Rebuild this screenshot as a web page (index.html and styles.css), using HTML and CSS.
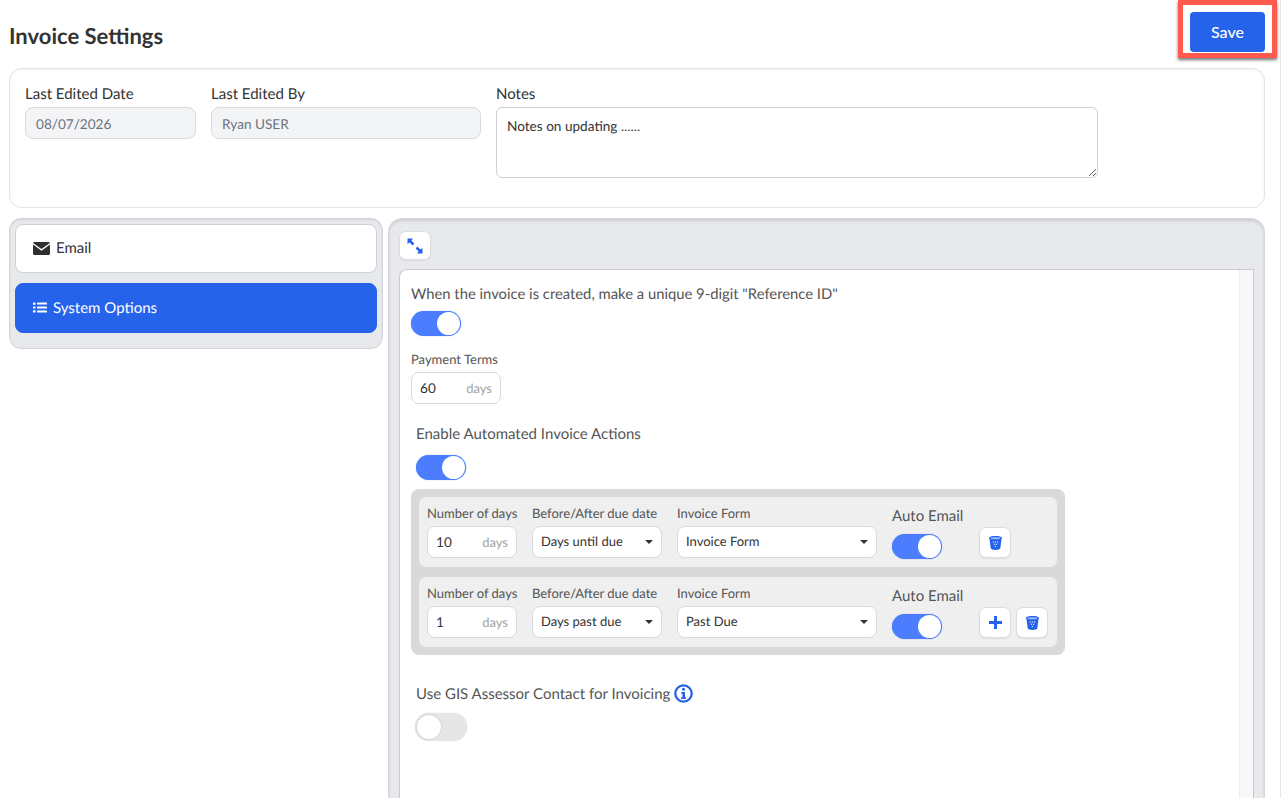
FILE: index.html
```html
<!DOCTYPE html>
<html lang="en">
<head>
    <meta charset="UTF-8">
    <title>Invoice Settings</title>
    <link rel="stylesheet" href="styles.css">
</head>
<body>
    <div class="page">
        <!-- Header -->
        <div class="header">
            <h1>Invoice Settings</h1>
            <div class="save-wrap">
                <button class="save-button">Save</button>
                <div class="save-highlight"></div>
            </div>
        </div>

        <!-- Summary card -->
        <div class="summary-card">
            <div class="field field-date">
                <label>Last Edited Date</label>
                <div class="readonly-input">08/07/2026</div>
            </div>
            <div class="field field-by">
                <label>Last Edited By</label>
                <div class="readonly-input">Ryan USER</div>
            </div>
            <div class="field field-notes">
                <label>Notes</label>
                <div class="notes-box">
                    Notes on updating ......
                    <svg class="resize-grip" width="8" height="8" viewBox="0 0 8 8"><path d="M1 8L8 1M5 8L8 5" stroke="#666" stroke-width="1"/></svg>
                </div>
            </div>
        </div>

        <div class="columns">
            <!-- Side tabs -->
            <div class="side-panel">
                <div class="tab">
                    <svg width="17" height="13" viewBox="0 0 17 13"><path d="M1.500 0h14c.6 0 1.200.4 1.400 1L8.500 7 .1 1C.3.4.9 0 1.500 0z" fill="#2f2f2f"/><path d="M0 2.600V11.500C0 12.300.7 13 1.500 13h14c.8 0 1.500-.7 1.500-1.500V2.600L8.500 8.700z" fill="#2f2f2f"/></svg>
                    Email
                </div>
                <div class="tab tab-active">
                    <svg width="14" height="11" viewBox="0 0 14 11"><g fill="#fff"><rect x="0" y="0.500" width="2.500" height="2.200" rx=".5"/><rect x="0" y="4.400" width="2.500" height="2.200" rx=".5"/><rect x="0" y="8.300" width="2.500" height="2.200" rx=".5"/><rect x="4" y="0.600" width="10" height="2" rx=".5"/><rect x="4" y="4.500" width="10" height="2" rx=".5"/><rect x="4" y="8.400" width="10" height="2" rx=".5"/></g></svg>
                    System Options
                </div>
            </div>

            <!-- Main panel -->
            <div class="main-panel">
                <button class="icon-button expand-button">
                    <svg width="16" height="16" viewBox="0 0 16 16"><path d="M0.500 0.500H6L4.400 2.600L7.400 5.600L5.600 7.400L2.600 4.400L0.500 6zM15.500 15.500H10L11.600 13.400L8.600 10.400L10.400 8.600L13.400 11.600L15.500 10z" fill="#2563eb"/></svg>
                </button>
                <div class="content-box">
                    <div class="content">
                        <div class="option-title first-title">When the invoice is created, make a unique 9-digit "Reference ID"</div>
                        <div class="toggle on"><span></span></div>

                        <div class="small-label terms-label">Payment Terms</div>
                        <div class="days-input terms-input"><span>60</span><em>days</em></div>

                        <div class="indented auto-option">
                            <div class="option-title">Enable Automated Invoice Actions</div>
                            <div class="toggle on toggle-auto"><span></span></div>
                        </div>

                        <div class="actions-group">
                            <div class="action-row">
                                <div class="col-days">
                                    <div class="small-label">Number of days</div>
                                    <div class="days-input"><span>10</span><em>days</em></div>
                                </div>
                                <div class="col-when">
                                    <div class="small-label">Before/After due date</div>
                                    <div class="select-box">Days until due<i></i></div>
                                </div>
                                <div class="col-form">
                                    <div class="small-label">Invoice Form</div>
                                    <div class="select-box">Invoice Form<i></i></div>
                                </div>
                                <div class="col-auto">
                                    <div class="auto-label">Auto Email</div>
                                    <div class="toggle on"><span></span></div>
                                </div>
                                <div class="col-buttons">
                                    <button class="icon-button">
                                        <svg width="13" height="14" viewBox="0 0 13 14"><path d="M6.500 0C9.800 0 13 .6 13 2.200c0 .4-.2.7-.5 1L11.300 12.300C10.800 14.500 2.200 14.500 1.700 12.300L.5 3.200C.2 2.900 0 2.600 0 2.200 0 .6 3.200 0 6.500 0z" fill="#2563eb"/><ellipse cx="6.500" cy="2.200" rx="5" ry="1" fill="#9db9f5"/><g fill="#cfdcfa"><circle cx="4.300" cy="6" r=".7"/><circle cx="6.500" cy="6" r=".7"/><circle cx="8.700" cy="6" r=".7"/><circle cx="5.400" cy="8.200" r=".7"/><circle cx="7.600" cy="8.200" r=".7"/><circle cx="6.500" cy="10.400" r=".7"/></g></svg>
                                    </button>
                                </div>
                            </div>
                            <div class="action-row">
                                <div class="col-days">
                                    <div class="small-label">Number of days</div>
                                    <div class="days-input"><span>1</span><em>days</em></div>
                                </div>
                                <div class="col-when">
                                    <div class="small-label">Before/After due date</div>
                                    <div class="select-box">Days past due<i></i></div>
                                </div>
                                <div class="col-form">
                                    <div class="small-label">Invoice Form</div>
                                    <div class="select-box">Past Due<i></i></div>
                                </div>
                                <div class="col-auto">
                                    <div class="auto-label">Auto Email</div>
                                    <div class="toggle on"><span></span></div>
                                </div>
                                <div class="col-buttons">
                                    <button class="icon-button">
                                        <svg width="13" height="13" viewBox="0 0 13 13"><path d="M5 0h3v5h5v3H8v5H5V8H0V5h5z" fill="#2563eb"/></svg>
                                    </button>
                                    <button class="icon-button">
                                        <svg width="13" height="14" viewBox="0 0 13 14"><path d="M6.500 0C9.800 0 13 .6 13 2.200c0 .4-.2.7-.5 1L11.300 12.300C10.800 14.500 2.200 14.500 1.700 12.300L.5 3.200C.2 2.900 0 2.600 0 2.200 0 .6 3.200 0 6.500 0z" fill="#2563eb"/><ellipse cx="6.500" cy="2.200" rx="5" ry="1" fill="#9db9f5"/><g fill="#cfdcfa"><circle cx="4.300" cy="6" r=".7"/><circle cx="6.500" cy="6" r=".7"/><circle cx="8.700" cy="6" r=".7"/><circle cx="5.400" cy="8.200" r=".7"/><circle cx="7.600" cy="8.200" r=".7"/><circle cx="6.500" cy="10.400" r=".7"/></g></svg>
                                    </button>
                                </div>
                            </div>
                        </div>

                        <div class="indented gis-option">
                            <div class="option-title">Use GIS Assessor Contact for Invoicing
                                <svg class="info-icon" width="19" height="19" viewBox="0 0 19 19"><circle cx="9.500" cy="9.500" r="8.200" fill="#fff" stroke="#2563eb" stroke-width="2.300"/><circle cx="9.500" cy="5.300" r="1.500" fill="#2563eb"/><path d="M7.300 8h3.700v5.200h1v1.800H7.200v-1.800h1.200V9.700H7.300z" fill="#2563eb"/></svg>
                            </div>
                            <div class="toggle off"><span></span></div>
                        </div>
                    </div>
                    <div class="scroll-track"></div>
                </div>
            </div>
        </div>
    </div>
</body>
</html>
```

FILE: styles.css
```css
/* Global Styles */
* {
    margin: 0;
    padding: 0;
    box-sizing: border-box;
}

html, body {
    height: 798px;
    overflow: hidden;
}

body {
    font-family: 'Lato', 'Liberation Sans', sans-serif;
    text-rendering: geometricPrecision;
    background: #fff;
    color: #333;
}

.page {
    width: 1281px;
    height: 798px;
    padding: 0 15px 0 9px;
    border-right: 1px solid #e6e6e6;
    overflow: hidden;
}

/* Header */
.header {
    display: flex;
    justify-content: space-between;
    height: 68px;
    padding-top: 12px;
}

.header h1 {
    font-size: 22px;
    font-weight: 700;
    color: #333;
    line-height: 47px;
}

.save-wrap {
    position: relative;
    width: 75px;
    height: 40px;
}

.save-button {
    width: 75px;
    height: 40px;
    padding-bottom: 2px;
    background: #2563eb;
    color: #fff;
    border: none;
    border-radius: 4px;
    font-family: inherit;
    font-size: 16px;
    font-weight: 500;
}

.save-highlight {
    position: absolute;
    top: -12px;
    left: -12px;
    width: 99px;
    height: 58px;
    border: 5px solid #ff5a4d;
    box-shadow: 0 2px 3px rgba(0, 0, 0, 0.55);
}

/* Summary card */
.summary-card {
    display: flex;
    height: 140px;
    padding: 16px 15px;
    border: 1px solid #e3e4e7;
    border-radius: 12px;
    box-shadow: inset 0 1px 3px rgba(0, 0, 0, 0.06);
}

.field label {
    display: block;
    font-size: 15px;
    line-height: 18px;
    color: #333;
    margin-bottom: 4px;
}

.field-date {
    width: 171px;
    margin-right: 15px;
}

.field-by {
    width: 270px;
    margin-right: 15px;
}

.field-notes {
    width: 602px;
}

.readonly-input {
    height: 32px;
    line-height: 33px;
    padding: 0 10px;
    background: #f3f4f6;
    border: 1px solid #d8dade;
    border-radius: 8px;
    font-size: 13.6px;
    color: #6b7280;
}

.notes-box {
    position: relative;
    height: 71px;
    padding: 10px;
    border: 1px solid #cfd1d5;
    border-radius: 6px;
    font-size: 13.6px;
    line-height: 17px;
    color: #333;
}

.resize-grip {
    position: absolute;
    right: 1px;
    bottom: 1px;
}

/* Columns */
.columns {
    display: flex;
    gap: 5px;
    margin-top: 10px;
    align-items: flex-start;
}

.side-panel {
    width: 374px;
    height: 131px;
    padding: 5px;
    background: #e8e9ed;
    border: 1px solid #d4d5d9;
    border-radius: 12px;
    box-shadow: inset 0 1px 2px rgba(0, 0, 0, 0.1);
}

.tab {
    display: flex;
    align-items: center;
    height: 49px;
    margin-bottom: 10px;
    padding: 0 0 1px 17px;
    gap: 6px;
    background: #fff;
    border: 1px solid #d0d1d5;
    border-radius: 8px;
    font-size: 15px;
    color: #333;
}

.tab-active {
    height: 50px;
    background: #2563eb;
    border-color: #2563eb;
    color: #fff;
}

.main-panel {
    width: 877px;
    height: 640px;
    padding: 12px 10px 0;
    background: #e8e9ed;
    border: 1px solid #d4d5d9;
    border-radius: 14px 14px 0 0;
    box-shadow: inset 0 2px 3px rgba(0, 0, 0, 0.12);
}

.icon-button {
    display: inline-flex;
    align-items: center;
    justify-content: center;
    width: 32px;
    height: 31px;
    background: #fff;
    border: 1px solid #dcdde0;
    border-radius: 7px;
    box-shadow: 0 1px 2px rgba(0, 0, 0, 0.06);
}

.expand-button {
    display: flex;
    height: 29px;
    margin-bottom: 9px;
}

.content-box {
    display: flex;
    height: 600px;
    background: #fff;
    border: 1px solid #c9cacd;
    border-bottom: none;
    border-radius: 8px 0 0 0;
}

.content {
    flex: 1;
    min-width: 0;
    padding: 14px 11px 0;
}

.scroll-track {
    width: 14px;
    background: #f8f8f8;
    border-left: 1px solid #efefef;
}

.option-title {
    font-size: 15px;
    line-height: 20px;
    color: #555;
}

.first-title {
    font-size: 14.8px;
}

.small-label {
    font-size: 13px;
    line-height: 16px;
    color: #555;
    white-space: nowrap;
}

.terms-label {
    margin-top: 15px;
}

.terms-input {
    margin-top: 5px;
}

/* Toggle */
.toggle {
    position: relative;
    width: 50px;
    height: 25px;
    margin-top: 7px;
    border-radius: 13px;
}

.toggle span {
    position: absolute;
    top: 1px;
    width: 23px;
    height: 23px;
    background: #fff;
    border-radius: 50%;
}

.toggle.on {
    background: #4c7dff;
    box-shadow: 0 0 1px rgba(37, 99, 235, 0.6);
}

.toggle.on span {
    right: 1px;
}

.toggle.off {
    width: 52px;
    height: 28px;
    margin-top: 9px;
    margin-left: -1px;
    border-radius: 14px;
    background: #e6e6e6;
    box-shadow: 0 0 1px rgba(0, 0, 0, 0.2);
}

.toggle.off span {
    left: 2px;
    top: 2px;
    width: 24px;
    height: 24px;
    box-shadow: 0 0 2px rgba(0, 0, 0, 0.2);
}

/* Inputs */
.days-input {
    display: flex;
    justify-content: space-between;
    align-items: center;
    width: 90px;
    height: 32px;
    padding: 0 8px 1px 8px;
    background: #fff;
    border: 1px solid #d8dade;
    border-radius: 8px;
    font-size: 13.6px;
    color: #333;
}

.days-input em {
    font-style: normal;
    font-size: 13px;
    color: #a3a3a3;
}

.indented {
    padding-left: 5px;
}

.auto-option {
    margin-top: 20px;
}

.toggle-auto {
    margin-top: 11px;
}

/* Automated actions */
.actions-group {
    width: 654px;
    margin-top: 9px;
    padding: 8px;
    background: #d9d9d9;
    border-radius: 8px;
}

.action-row {
    display: flex;
    height: 70px;
    padding: 8px 8px 0;
    background: #efefef;
    border-radius: 7px;
}

.action-row + .action-row {
    margin-top: 10px;
}

.col-days {
    width: 105px;
}

.col-when {
    width: 145px;
}

.col-form {
    width: 215px;
}

.col-days .days-input,
.select-box {
    margin-top: 5px;
}

.select-box {
    position: relative;
    display: flex;
    align-items: center;
    height: 32px;
    width: 130px;
    padding: 0 0 2px 8px;
    background: #fff;
    border: 1px solid #d8dade;
    border-radius: 8px;
    font-size: 13px;
    color: #333;
}

.col-form .select-box {
    width: 200px;
}

.select-box i {
    position: absolute;
    right: 8px;
    top: 13px;
    border-left: 4px solid transparent;
    border-right: 4px solid transparent;
    border-top: 4px solid #333;
}

.col-auto {
    width: 87px;
}

.auto-label {
    font-size: 15px;
    line-height: 18px;
    margin-top: 2px;
    color: #555;
}

.col-auto .toggle {
    margin-top: 9px;
}

.col-buttons {
    display: flex;
    gap: 5px;
    padding-top: 22px;
}

.gis-option {
    margin-top: 29px;
}

.info-icon {
    vertical-align: -4px;
    margin-left: 0;
}
```
